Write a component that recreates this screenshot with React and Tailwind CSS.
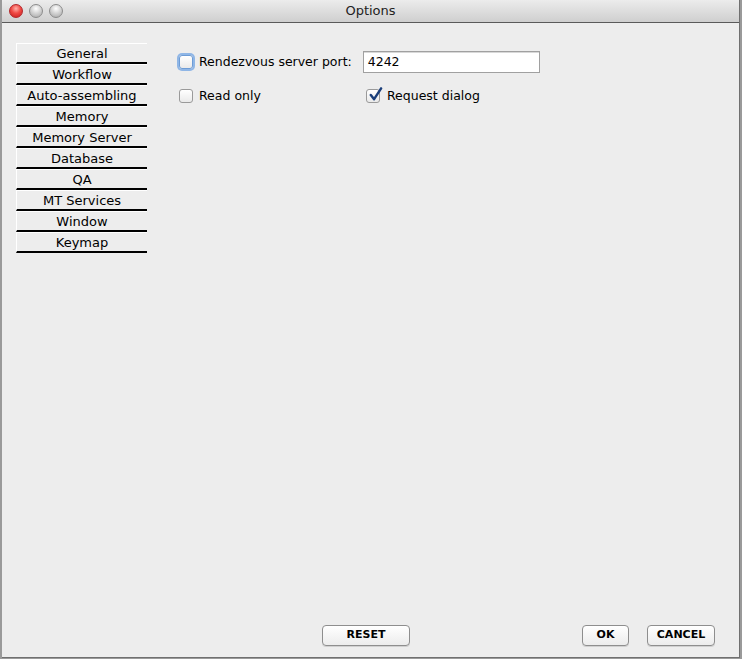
import React from 'react'

const tabs = ['General', 'Workflow', 'Auto-assembling', 'Memory', 'Memory Server', 'Database', 'QA', 'MT Services', 'Window', 'Keymap']

function Light({ red }) {
  return (
    <div
      className={`w-[14px] h-[14px] rounded-full border ${
        red
          ? 'border-[#b3262a] bg-[radial-gradient(circle_at_50%_30%,#ffb0a8_0%,#f04a45_45%,#c51b1b_100%)]'
          : 'border-[#8c8c8c] bg-[radial-gradient(circle_at_50%_30%,#ffffff_0%,#d4d4d4_45%,#a5a5a5_100%)]'
      }`}
    />
  )
}

function Check({ checked, focused }) {
  return (
    <div
      className={`relative w-[14px] h-[14px] rounded-[3px] bg-gradient-to-b from-white to-[#eaeaea] border ${
        focused ? 'border-[#6d9cd6] shadow-[0_0_0_2px_#8fb6e6]' : 'border-[#9a9a9a]'
      }`}
    >
      {checked && (
        <svg viewBox="0 0 16 16" className="absolute left-[1px] -top-[3px] w-[15px] h-[15px]">
          <path d="M3 8.5 L6.5 13 L14 1.5" fill="none" stroke="#1a3e7a" strokeWidth="2.6" strokeLinecap="round" strokeLinejoin="round" />
        </svg>
      )}
    </div>
  )
}

function Btn({ children, w }) {
  return (
    <button className={`${w} h-[21px] rounded-[4px] border border-[#8e8e8e] bg-gradient-to-b from-white to-[#ececec] text-[11px] font-bold text-black shadow-[0_1px_0_#d0d0d0]`}>
      {children}
    </button>
  )
}

export default function App() {
  return (
    <div className="w-[742px] h-[659px] bg-[#9a9a9a] flex font-['DejaVu_Sans',sans-serif] text-black">
      <div className="ml-[2px] w-[738px] h-[658px] flex flex-col bg-[#ededed] border-r border-b border-[#707070]">
        {/* title bar */}
        <div className="relative h-[23px] shrink-0 bg-gradient-to-b from-[#ececec] to-[#cfcfcf] border-b border-[#5a5a5a] rounded-t-[4px] flex items-center justify-center">
          <div className="absolute left-[7px] top-[4px] flex gap-[6px]">
            <Light red />
            <Light />
            <Light />
          </div>
          <span className="text-[13px] text-[#222]">Options</span>
        </div>

        <div className="flex-1 flex">
          {/* sidebar */}
          <div className="ml-[14px] mt-[20px] w-[131px] flex flex-col">
            {tabs.map(t => (
              <div
                key={t}
                className="h-[21px] flex items-center justify-center border-t border-l border-white border-b-[2px] border-b-black text-[13px] leading-none"
              >
                {t}
              </div>
            ))}
          </div>

          {/* content */}
          <div className="flex-1 flex flex-col">
            <div className="ml-[32px] mt-[28px] flex items-center">
              <Check focused />
              <span className="ml-[6px] text-[12.5px]">Rendezvous server port:</span>
              <div className="ml-[11px] w-[177px] h-[22px] bg-white border border-[#a0a0a0] shadow-[inset_0_1px_0_#d8d8d8] flex items-center px-[4px] text-[12.5px]">
                4242
              </div>
            </div>
            <div className="ml-[32px] mt-[14px] flex items-center">
              <div className="w-[187px] flex items-center">
                <Check />
                <span className="ml-[6px] text-[12.5px]">Read only</span>
              </div>
              <Check checked />
              <span className="ml-[7px] text-[12.5px]">Request dialog</span>
            </div>

            <div className="mt-auto mb-[11px] flex items-center">
              <div className="ml-[175px]">
                <Btn w="w-[88px]">RESET</Btn>
              </div>
              <div className="ml-[172px]">
                <Btn w="w-[47px]">OK</Btn>
              </div>
              <div className="ml-[18px]">
                <Btn w="w-[68px]">CANCEL</Btn>
              </div>
            </div>
          </div>
        </div>
      </div>
    </div>
  )
}
